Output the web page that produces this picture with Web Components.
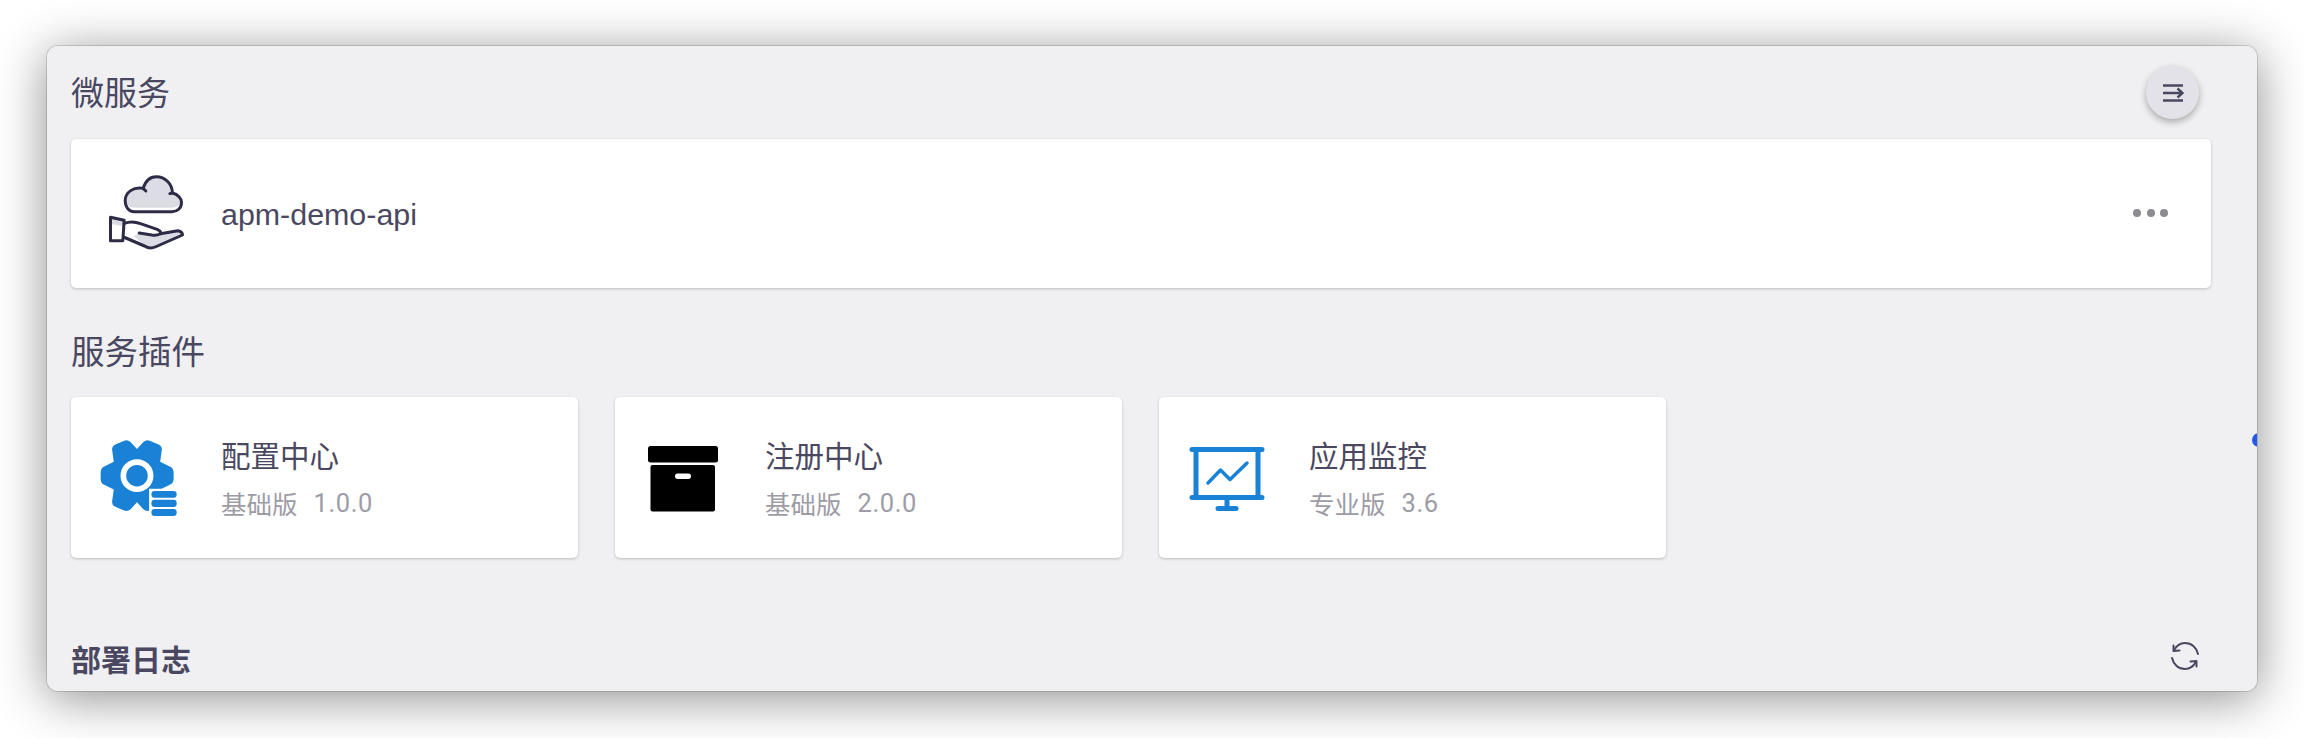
<!DOCTYPE html>
<html lang="zh">
<head>
<meta charset="utf-8">
<title>微服务</title>
<style>
  html, body { margin: 0; background: #fff; }
  body { font-family: "Liberation Sans", "Noto Sans CJK SC", sans-serif; color: #4a4860; }
</style>
</head>
<body>

<app-window>
  <section-title>微服务</section-title>
  <service-card>apm-demo-api</service-card>
  <section-title gap="plugin">服务插件</section-title>
  <plugin-row>
    <plugin-card name="配置中心" edition="基础版" version="1.0.0">
      <svg slot="icon" width="79" height="79" viewBox="150 182 235 235">
        <path fill="#1a82d6" d="M260 212L279 191Q288 183 298 187L326 199Q335 204 334 214L329 250L362 266Q369 271 369 280L369 302Q369 311 362 316L329 332L334 368Q335 378 326 383L298 395Q288 399 279 391L260 370L241 391Q232 399 222 395L194 383Q185 378 186 368L191 332L158 316Q152 311 152 302L152 280Q152 271 158 266L191 250L186 214Q185 204 194 199L222 187Q232 183 241 191Z"/>
        <circle cx="260" cy="291" r="40.500" fill="none" stroke="#fff" stroke-width="17"/>
        <path fill="#fff" d="M296 330H390V420H296Z"/>
        <rect x="303" y="337" width="75" height="20" rx="9" fill="#1a82d6"/>
        <rect x="303" y="363" width="75" height="21" rx="9" fill="#1a82d6"/>
        <rect x="303" y="390" width="75" height="21" rx="9" fill="#1a82d6"/>
      </svg>
    </plugin-card>
    <plugin-card name="注册中心" edition="基础版" version="2.0.0">
      <svg slot="icon" width="70" height="66" viewBox="0 0 70 66">
        <rect x="0" y="0" width="70" height="16.500" rx="2.500" fill="#000"/>
        <rect x="2.500" y="19" width="64.500" height="46.500" rx="2" fill="#000"/>
        <rect x="27" y="27.500" width="16" height="5.500" rx="2.700" fill="#fff"/>
      </svg>
    </plugin-card>
    <plugin-card name="应用监控" edition="专业版" version="3.6">
      <svg slot="icon" width="76" height="66" viewBox="0 0 76 66" fill="none" stroke="#1a82d6" stroke-linecap="round" stroke-linejoin="round">
        <path stroke-width="5" d="M3 3.500H73M3 51.500H73"/>
        <path stroke-width="5" stroke-linecap="butt" d="M7 3.500V51.500M69 3.500V51.500M38 51.500V61"/>
        <path stroke-width="5" d="M29 62.500H47"/>
        <path stroke-width="3.500" d="M19 37L31.500 24L41 33.500L58 17"/>
      </svg>
    </plugin-card>
  </plugin-row>
  <section-title gap="log" bold>部署日志</section-title>
</app-window>

<script>
  class AppWindow extends HTMLElement {
    constructor () {
      super()
      this.attachShadow({ mode: 'open' }).innerHTML = /*html*/`
      <style>
        :host {
          display: block;
          padding: 46px 47px 47px 47px;
        }
        .window {
          position: relative;
          overflow: hidden;
          box-sizing: border-box;
          height: 645px;
          padding: 0 46px 0 24px;
          background: #f0f0f3;
          border-radius: 11px;
          box-shadow: 0 0 0 1px rgba(0, 0, 0, .14);
        }
        .shadow {
          border-radius: 11px;
          box-shadow: 0 7px 50px rgba(0, 0, 0, .45);
        }
        .fab {
          position: absolute;
          left: 2099px;
          top: 20px;
          width: 53px;
          height: 53px;
          display: flex;
          align-items: center;
          justify-content: center;
          border-radius: 50%;
          background: #e3e2e8;
          box-shadow: 0 3px 7px rgba(0, 0, 0, .3);
        }
        .refresh {
          position: absolute;
          left: 2123px;
          top: 595px;
          display: block;
        }
        .dot {
          position: absolute;
          left: 2205px;
          top: 387px;
          width: 14px;
          height: 14px;
          border-radius: 50%;
          background: #2258ee;
        }
      </style>
      <div class="shadow">
      <div class="window">
        <slot></slot>
        <div class="fab">
          <svg width="22" height="18" viewBox="0 0 22 18" fill="none" stroke="#4a4860" stroke-width="2.400">
            <path d="M1 1.500H21M1 9H20M15.500 4.500L20.500 9L15.500 13.500M1 16.500H21"/>
          </svg>
        </div>
        <svg class="refresh" width="30" height="30" viewBox="0 0 30 30" fill="none" stroke="#4a4860" stroke-width="2" stroke-linecap="round" stroke-linejoin="round">
          <path d="M4 9.500C6.500 4.500 10.500 2 15 2C21.500 2 26.500 6.500 28 13"/>
          <path d="M26 20.500C23.500 25.500 19.500 28 15 28C8.500 28 3.500 23.500 2 17"/>
          <path d="M9.500 9.500L3.500 10L3.500 4.500"/>
          <path d="M20.500 20.500L26.500 20L26.500 25.500"/>
        </svg>
        <div class="dot"></div>
      </div>
      </div>`
    }
  }

  class SectionTitle extends HTMLElement {
    constructor () {
      super()
      this.attachShadow({ mode: 'open' }).innerHTML = /*html*/`
      <style>
        :host {
          display: block;
          height: 46px;
          padding-top: 22px;
          margin-bottom: 25px;
          line-height: 46px;
          font-size: 33px;
          font-family: "Noto Sans CJK SC", sans-serif;
          color: #4a4860;
          white-space: nowrap;
        }
        :host([gap="plugin"]) {
          height: 44px;
          line-height: 44px;
          padding-top: 40px;
          margin-bottom: 25px;
          font-size: 33.500px;
        }
        :host([gap="log"]) {
          height: 42px;
          line-height: 42px;
          padding-top: 79px;
          margin-bottom: 0;
          font-size: 30px;
        }
        :host([bold]) { font-weight: 700; }
      </style>
      <slot></slot>`
    }
  }

  class ServiceCard extends HTMLElement {
    constructor () {
      super()
      this.attachShadow({ mode: 'open' }).innerHTML = /*html*/`
      <style>
        :host {
          display: flex;
          align-items: center;
          box-sizing: border-box;
          height: 149px;
          padding: 2px 43px 0 36px;
          background: #fff;
          border-radius: 5px;
          box-shadow: 0 1px 3px rgba(0, 0, 0, .22);
          font-size: 30.400px;
          color: #4a4860;
        }
        .icon { display: block; width: 79px; margin-right: 35px; flex: none; }
        .name { flex: 1; }
        .more { display: flex; gap: 5.500px; margin-top: -3px; }
        .more i { width: 8px; height: 8px; border-radius: 50%; background: #8a8a8f; }
      </style>
      <svg class="icon" width="79" height="80" viewBox="50 48 236 240" fill="none" stroke="#2d2b45" stroke-width="9" stroke-linejoin="round" stroke-linecap="round">
        <path stroke="none" fill="#dcdde4" d="M132 146C115 146 108 135 108 125C108 102 130 88 158 92C165 70 180 57 197 57C222 57 242 78 243 104C258 108 268 118 268 130C268 140 258 146 245 146Z"/>
        <path stroke="none" fill="#dcdde4" d="M60 195L98 202L98 178L60 176ZM130 232L145 222C170 226 195 228 214 226L262 216L270 228L190 262Q175 268 160 258Z"/>
        <path d="M132 158C112 158 104 140 104 125C104 100 130 82 158 88C165 65 180 53 197 53C225 53 245 75 246 102C262 106 273 118 273 130C273 148 260 158 245 158Z"/>
        <path d="M158 88L166 96M246 102L238 104"/>
        <path d="M60 175L101 184L97 245L60 245Z"/>
        <path d="M101 193C120 186 135 188 150 194L200 211Q216 218 208 225Q200 230 184 228L146 222"/>
        <path d="M210 224L262 215Q276 218 276 228L194 264Q178 271 162 261L99 234"/>
      </svg>
      <span class="name"><slot></slot></span>
      <div class="more"><i></i><i></i><i></i></div>`
    }
  }

  class PluginRow extends HTMLElement {
    constructor () {
      super()
      this.attachShadow({ mode: 'open' }).innerHTML = /*html*/`
      <style>
        :host { display: flex; gap: 37px; }
      </style>
      <slot></slot>`
    }
  }

  class PluginCard extends HTMLElement {
    constructor () {
      super()
      this.attachShadow({ mode: 'open' })
    }

    connectedCallback () {
      this.shadowRoot.innerHTML = /*html*/`
      <style>
        :host {
          display: flex;
          align-items: center;
          box-sizing: border-box;
          width: 507px;
          height: 161px;
          background: #fff;
          border-radius: 5px;
          box-shadow: 0 1px 3px rgba(0, 0, 0, .22);
        }
        .icon {
          width: 136px;
          margin-right: 14px;
          margin-top: 2px;
          flex: none;
          display: flex;
          justify-content: center;
        }
        .name {
          font-family: "Noto Sans CJK SC", sans-serif;
          font-size: 29.500px;
          line-height: 40px;
          color: #4a4860;
        }
        .meta {
          display: flex;
          gap: 16px;
          margin-top: 11px;
          line-height: 36px;
          color: #9d9ca6;
        }
        .edition { font-family: "Noto Sans CJK SC", sans-serif; font-size: 25.500px; }
        .version { font-family: Roboto, sans-serif; font-size: 25.500px; letter-spacing: .6px; }
      </style>
      <div class="icon"><slot name="icon"></slot></div>
      <div class="text">
        <div class="name">${this.getAttribute('name')}</div>
        <div class="meta">
          <span class="edition">${this.getAttribute('edition')}</span>
          <span class="version">${this.getAttribute('version')}</span>
        </div>
      </div>`
    }
  }

  customElements.define('app-window', AppWindow)
  customElements.define('section-title', SectionTitle)
  customElements.define('service-card', ServiceCard)
  customElements.define('plugin-row', PluginRow)
  customElements.define('plugin-card', PluginCard)
</script>
</body>
</html>
